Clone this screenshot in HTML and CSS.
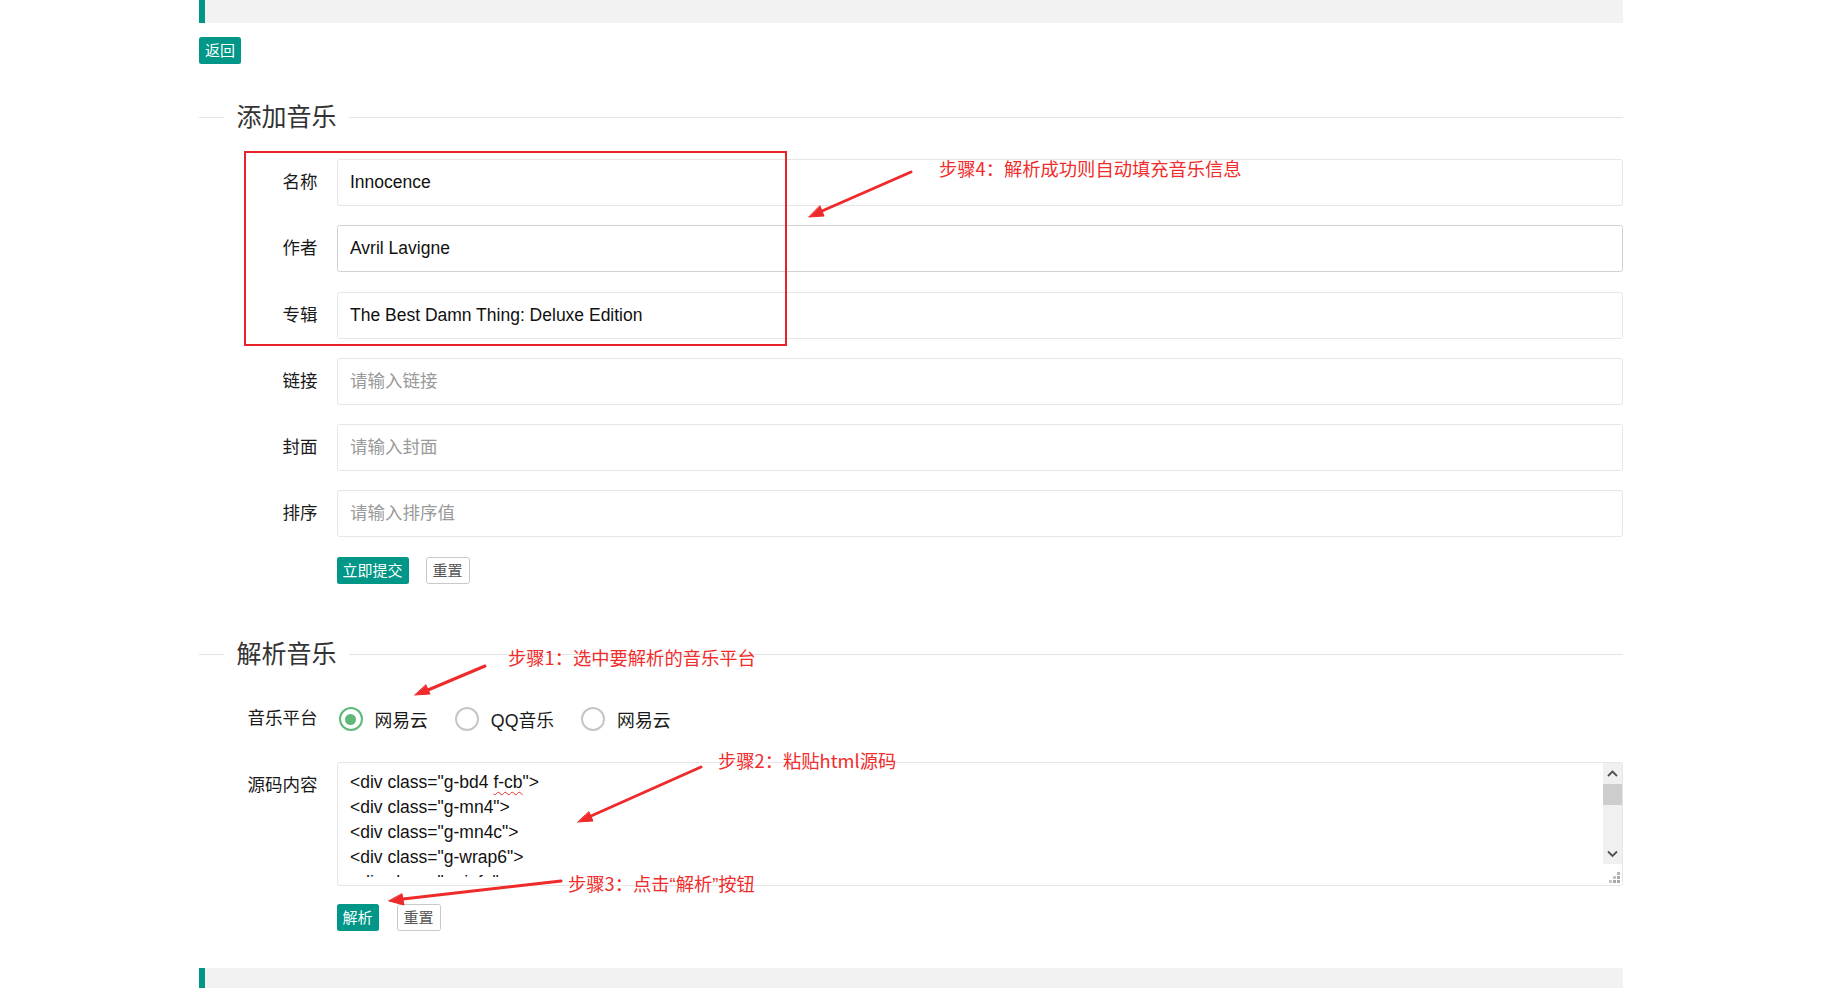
FILE: index.html
```html
<!DOCTYPE html>
<html lang="zh-CN">
<head>
<meta charset="utf-8">
<title>添加音乐</title>
<link rel="stylesheet" href="styles.css">
</head>
<body>
<div class="page">
  <blockquote class="quote">音乐管理 &gt; 添加音乐</blockquote>
  <div class="back-row"><a class="btn">返回</a></div>

  <div class="field-title first"><span class="legend">添加音乐</span></div>
  <form class="form">
    <div class="form-item">
      <label class="form-label">名称</label>
      <div class="input-block"><input class="input" type="text" value="Innocence"></div>
    </div>
    <div class="form-item">
      <label class="form-label">作者</label>
      <div class="input-block"><input class="input hover" type="text" value="Avril Lavigne"></div>
    </div>
    <div class="form-item">
      <label class="form-label">专辑</label>
      <div class="input-block"><input class="input" type="text" value="The Best Damn Thing: Deluxe Edition"></div>
    </div>
    <div class="form-item">
      <label class="form-label">链接</label>
      <div class="input-block"><input class="input" type="text" placeholder="请输入链接"></div>
    </div>
    <div class="form-item">
      <label class="form-label">封面</label>
      <div class="input-block"><input class="input" type="text" placeholder="请输入封面"></div>
    </div>
    <div class="form-item">
      <label class="form-label">排序</label>
      <div class="input-block"><input class="input" type="text" placeholder="请输入排序值"></div>
    </div>
    <div class="form-item btn-row">
      <div class="input-block offset">
        <button type="button" class="btn">立即提交</button>
        <button type="button" class="btn btn-primary gap-a">重置</button>
      </div>
    </div>
  </form>

  <div class="field-title second"><span class="legend">解析音乐</span></div>
  <form class="form">
    <div class="form-item">
      <label class="form-label">音乐平台</label>
      <div class="input-block radios">
        <span class="radio checked"><i class="radio-icon"></i><span>网易云</span></span>
        <span class="radio"><i class="radio-icon"></i><span>QQ音乐</span></span>
        <span class="radio"><i class="radio-icon"></i><span>网易云</span></span>
      </div>
    </div>
    <div class="form-item">
      <label class="form-label ta-label">源码内容</label>
      <div class="input-block">
        <div class="textarea">
          <div class="ta-content">&lt;div class="g-bd4 <span class="spell">f-cb</span>"&gt;
&lt;div class="g-mn4"&gt;
&lt;div class="g-mn4c"&gt;
&lt;div class="g-wrap6"&gt;
&lt;div class="m-info"&gt;</div>
          <div class="ta-scrollbar">
            <div class="sb-btn"><svg width="19" height="21" viewBox="0 0 19 21"><polyline points="5,13 9.5,8.5 14,13" fill="none" stroke="#505050" stroke-width="1.8"/></svg></div>
            <div class="sb-track"><div class="sb-thumb"></div></div>
            <div class="sb-btn"><svg width="19" height="21" viewBox="0 0 19 21"><polyline points="5,8.5 9.5,13 14,8.5" fill="none" stroke="#505050" stroke-width="1.8"/></svg></div>
            <div class="sb-corner"><svg width="19" height="21" viewBox="0 0 19 21"><rect x="14" y="8" width="3" height="3" fill="#b4b4b4"/><rect x="10" y="12" width="3" height="3" fill="#c4c4c4"/><rect x="14" y="12" width="3" height="3" fill="#a8a8a8"/><rect x="6" y="16" width="3" height="3" fill="#c4c4c4"/><rect x="10" y="16" width="3" height="3" fill="#a8a8a8"/><rect x="14" y="16" width="3" height="3" fill="#a8a8a8"/></svg></div>
          </div>
        </div>
      </div>
    </div>
    <div class="form-item btn-row">
      <div class="input-block offset">
        <button type="button" class="btn">解析</button>
        <button type="button" class="btn btn-primary gap-b">重置</button>
      </div>
    </div>
  </form>

  <blockquote class="quote bottom"></blockquote>
</div>

<div class="annotations">
  <div class="red-box"></div>
  <svg class="arrows" width="1822" height="988" viewBox="0 0 1822 988">
    <g stroke="#ee2a2a" stroke-width="3" stroke-linecap="round" fill="#ee2a2a">
      <line x1="911" y1="172" x2="822" y2="211"/>
      <polygon points="809,217 824,216 820,206" stroke-width="1"/>
      <line x1="485" y1="666" x2="428" y2="690"/>
      <polygon points="415,695 430,694 426,685" stroke-width="1"/>
      <line x1="701" y1="767" x2="591" y2="816"/>
      <polygon points="578,822 593,821 589,812" stroke-width="1"/>
      <line x1="561" y1="881" x2="403" y2="899"/>
      <polygon points="389,901 404,905 402,894" stroke-width="1"/>
    </g>
  </svg>
  <div class="note n4">步骤4：解析成功则自动填充音乐信息</div>
  <div class="note n1">步骤1：选中要解析的音乐平台</div>
  <div class="note n2">步骤2：粘贴html源码</div>
  <div class="note n3">步骤3：点击<span class="q">“</span>解析<span class="q">”</span>按钮</div>
</div>
</body>
</html>
```

FILE: styles.css
```css
html, body {
  margin: 0;
  padding: 0;
  overflow: hidden;
  background: #fff;
}

body {
  font-family: "Liberation Sans", "Noto Sans CJK SC", sans-serif;
  color: #333;
  font-size: 17.5px;
}

.page {
  width: 1424px;
  margin: 0 auto;
}

.quote {
  margin: -42px 0 14px;
  padding: 19px 19px;
  line-height: 27px;
  border-left: 6px solid #009688;
  background: #f2f2f2;
  font-size: 17.5px;
  color: #333;
}

.quote.bottom {
  margin: 18px 0 0;
  height: 60px;
  padding: 0;
}

.back-row {
  height: 27px;
}

.btn {
  display: inline-block;
  box-sizing: border-box;
  height: 27px;
  line-height: 27px;
  padding: 0 6px;
  border: none;
  border-radius: 2.5px;
  background: #009688;
  color: #fff;
  font-family: "Liberation Sans", "Noto Sans CJK SC", sans-serif;
  font-size: 15px;
  vertical-align: top;
  cursor: pointer;
  text-decoration: none;
}

.btn-primary {
  border: 1px solid #c9c9c9;
  background: #fff;
  color: #555;
  line-height: 25px;
}

.gap-a { margin-left: 17px; }
.gap-b { margin-left: 18px; }

.field-title {
  display: flex;
  align-items: center;
  height: 36px;
}

.field-title::before {
  content: "";
  width: 25px;
  border-top: 1px solid #e4e4e4;
}

.field-title::after {
  content: "";
  flex: 1;
  border-top: 1px solid #e4e4e4;
}

.field-title.first { margin: 35px 0 24px; }
.field-title.second { margin: 34px 0 23px; }

.legend {
  padding: 0 12.5px;
  font-size: 25px;
  font-weight: 400;
  line-height: 36px;
  color: #333;
}

.form {
  display: flow-root;
  margin: 0;
}

.form-item {
  display: flex;
  margin-bottom: 18.75px;
}

.form-label {
  box-sizing: border-box;
  flex: 0 0 137.5px;
  padding-right: 19px;
  text-align: right;
  line-height: 47.5px;
  font-size: 17.5px;
  color: #1a1a1a;
}

.form-label.ta-label {
  line-height: 25px;
  padding-top: 11px;
}

.input-block {
  flex: 1;
  min-width: 0;
}

.input-block.offset {
  display: flex;
  margin-left: 137.5px;
}

.input {
  display: block;
  box-sizing: border-box;
  width: 100%;
  height: 47px;
  margin: 0;
  padding: 0 12.5px;
  border: 1px solid #e6e6e6;
  border-radius: 2.5px;
  background: #fff;
  font-family: "Liberation Sans", "Noto Sans CJK SC", sans-serif;
  font-size: 17.5px;
  color: #111;
  outline: none;
}

.input.hover {
  border-color: #d2d2d2;
}

.input::placeholder {
  color: #9a9a9a;
}

.radios {
  display: flex;
  align-items: center;
  height: 47.5px;
  padding-left: 2px;
}

.radio {
  display: inline-flex;
  align-items: center;
  margin-right: 27px;
  font-size: 17.8px;
  color: #1a1a1a;
}

.radio-icon {
  box-sizing: border-box;
  width: 24px;
  height: 24px;
  margin-right: 12px;
  border: 2px solid #c6c6c6;
  border-radius: 50%;
  display: flex;
  align-items: center;
  justify-content: center;
}

.radio.checked .radio-icon {
  border-color: #5fb878;
}

.radio.checked .radio-icon::after {
  content: "";
  width: 11px;
  height: 11px;
  border-radius: 50%;
  background: #5fb878;
}

.textarea {
  display: flex;
  box-sizing: border-box;
  height: 124px;
  border: 1px solid #e6e6e6;
  border-radius: 2.5px;
  background: #fff;
}

.ta-content {
  flex: 1;
  align-self: flex-start;
  box-sizing: border-box;
  height: 114px;
  padding: 7px 12.5px 0;
  overflow: hidden;
  white-space: pre;
  line-height: 25px;
  font-size: 17.5px;
  color: #111;
}

.spell {
  text-decoration: underline wavy #e03030;
  text-decoration-thickness: 1px;
  text-underline-offset: 3px;
}

.ta-scrollbar {
  display: flex;
  flex-direction: column;
  width: 19px;
  flex: 0 0 19px;
}

.sb-btn {
  height: 21px;
  background: #f0f0f0;
}

.sb-btn svg, .sb-corner svg {
  display: block;
}

.sb-track {
  flex: 1;
  background: #f0f0f0;
}

.sb-thumb {
  height: 21px;
  background: #cdcdcd;
}

.sb-corner {
  height: 21px;
  background: #fff;
}

.annotations {
  position: absolute;
  left: 0;
  top: 0;
  width: 1822px;
  height: 988px;
  pointer-events: none;
}

.arrows {
  position: absolute;
  left: 0;
  top: 0;
}

.red-box {
  position: absolute;
  left: 244px;
  top: 151px;
  width: 543px;
  height: 195px;
  box-sizing: border-box;
  border: 2px solid #e8222a;
}

.note {
  position: absolute;
  font-family: "Noto Sans CJK SC", sans-serif;
  font-size: 18.3px;
  line-height: 24px;
  color: #f02c2c;
  white-space: nowrap;
}

.note .q {
  font-family: "Liberation Sans", sans-serif;
}

.n4 { left: 939px; top: 156px; }
.n1 { left: 508px; top: 645px; }
.n2 { left: 718px; top: 748px; }
.n3 { left: 568px; top: 871px; }
```
